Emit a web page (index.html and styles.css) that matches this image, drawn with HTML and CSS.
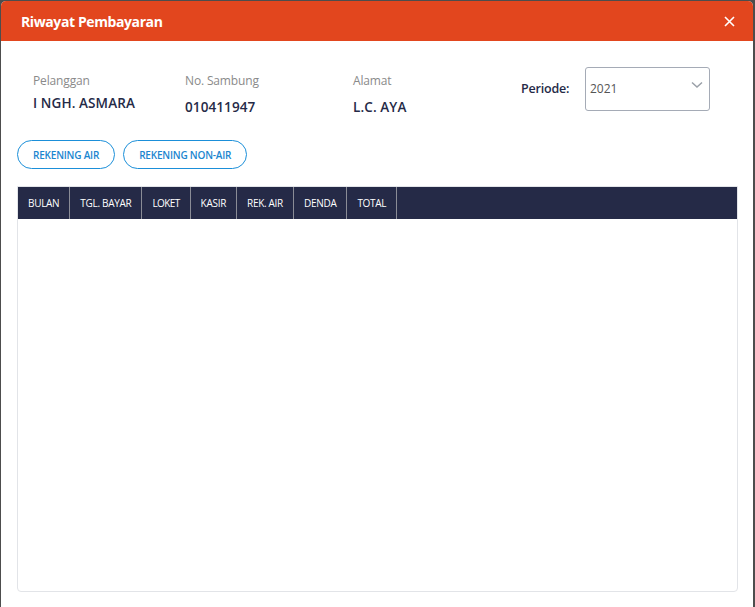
FILE: index.html
```html
<!DOCTYPE html>
<html lang="id">
<head>
<meta charset="utf-8">
<link rel="stylesheet" href="styles.css">
</head>
<body>
<div class="modal">
  <div class="modal-header">
    <span class="modal-title">Riwayat Pembayaran</span>
    <span class="close">
      <svg width="11" height="11" viewBox="0 0 11 11"><path d="M1 1L10 10M10 1L1 10" stroke="#fff" stroke-width="1.6" fill="none"/></svg>
    </span>
  </div>
  <div class="modal-body">
    <div class="info">
      <div class="field">
        <div class="label">Pelanggan</div>
        <div class="value first">I NGH. ASMARA</div>
      </div>
      <div class="field">
        <div class="label">No. Sambung</div>
        <div class="value">010411947</div>
      </div>
      <div class="field">
        <div class="label">Alamat</div>
        <div class="value">L.C. AYA</div>
      </div>
      <div class="periode">
        <span class="periode-label">Periode:</span>
        <div class="select">
          <span>2021</span>
          <svg class="chev" width="12" height="8" viewBox="0 0 12 8"><path d="M1 1.5L6 6L11 1.5" stroke="#9aa0a8" stroke-width="1.5" fill="none"/></svg>
        </div>
      </div>
    </div>
    <div class="tabs">
      <button class="pill">REKENING AIR</button>
      <button class="pill">REKENING NON-AIR</button>
    </div>
    <div class="table-wrap">
      <div class="thead">
        <div class="th">BULAN</div>
        <div class="th">TGL. BAYAR</div>
        <div class="th tight">LOKET</div>
        <div class="th">KASIR</div>
        <div class="th">REK. AIR</div>
        <div class="th">DENDA</div>
        <div class="th">TOTAL</div>
      </div>
      <div class="tbody"></div>
    </div>
  </div>
</div>
</body>
</html>
```
FILE: styles.css
```css
* { box-sizing: border-box; }
html, body { margin: 0; padding: 0; height: 100%; }
body {
  background: #4d4d4d;
  font-family: "Open Sans", "Noto Sans", sans-serif;
  overflow: hidden;
}
.modal {
  margin: 1px 2px 0 1px;
  background: #fff;
  border-radius: 5px 5px 0 0;
  height: 606px;
  display: flex;
  flex-direction: column;
}
.modal-header {
  background: #e2461e;
  height: 40px;
  border-radius: 5px 5px 0 0;
  display: flex;
  align-items: center;
  justify-content: space-between;
  padding: 0 18px 0 20px;
}
.modal-title {
  color: #fff;
  font-weight: 700;
  font-size: 14px;
  letter-spacing: -0.4px;
}
.close { display: flex; }
.modal-body {
  flex: 1;
  padding: 0 15px 15px 16px;
  display: flex;
  flex-direction: column;
}
.info {
  display: grid;
  grid-template-columns: 152px 168px 168px auto;
  padding: 32px 0 0 16px;
  height: 99px;
}
.label {
  font-size: 12px;
  color: #8a8a8a;
  line-height: 16px;
  letter-spacing: -0.15px;
}
.value {
  font-size: 13.5px;
  font-weight: 600;
  color: #252a47;
  margin-top: 10px;
  line-height: 16px;
  letter-spacing: 0.1px;
}
.value.first { margin-top: 6px; }
.periode {
  display: flex;
  align-items: flex-start;
  margin-top: -6px;
}
.periode-label {
  font-size: 12.5px;
  font-weight: 600;
  color: #252a47;
  margin-top: 13px;
  width: 64px;
  letter-spacing: -0.2px;
}
.select {
  width: 125px;
  height: 44px;
  border: 1px solid #a5abb6;
  border-radius: 3px;
  display: flex;
  align-items: flex-start;
  justify-content: space-between;
  padding: 12px 6px 0 4px;
  font-size: 12px;
  color: #555;
}
.chev { margin-top: 1px; }
.tabs {
  display: flex;
  gap: 8px;
}
.pill {
  height: 29px;
  border: 1px solid #1b8fd9;
  border-radius: 15px;
  background: #fff;
  color: #1b86cf;
  font-family: inherit;
  font-size: 10px;
  font-weight: 600;
  padding: 0 15px;
  letter-spacing: -0.2px;
}
.table-wrap {
  margin-top: 17px;
  flex: 1;
  border: 1px solid #e2e4e8;
  border-radius: 0 0 4px 4px;
  display: flex;
  flex-direction: column;
}
.thead {
  background: #252a47;
  height: 32px;
  display: flex;
}
.th {
  color: #fff;
  font-size: 10px;
  padding: 0 10px;
  display: flex;
  align-items: center;
  border-right: 1px solid #8a8c96;
  letter-spacing: -0.3px;
}
.th.tight { letter-spacing: -0.6px; }
.tbody { flex: 1; }
```
